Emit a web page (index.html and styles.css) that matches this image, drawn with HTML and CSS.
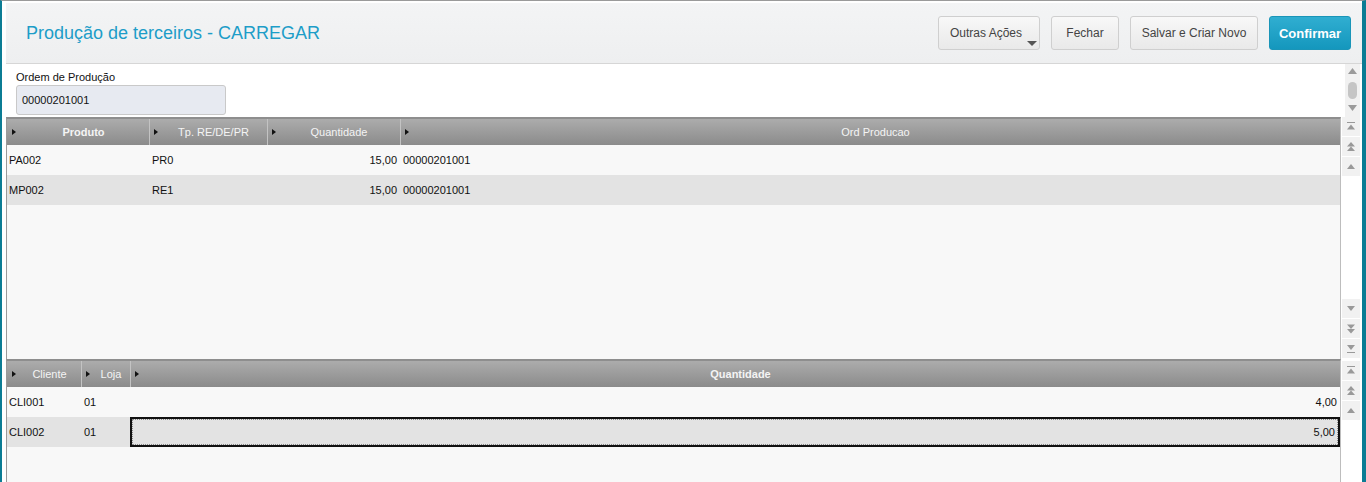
FILE: index.html
```html
<!DOCTYPE html>
<html>
<head>
	<meta charset="utf-8">
	<title>Produção de terceiros - CARREGAR</title>
	<link rel="stylesheet" href="styles.css">
</head>
<body>
	<div class="frame">
		<div class="topbar">
			<div class="title">Produção de terceiros - CARREGAR</div>
			<div class="actions">
				<button class="btn more">Outras Ações<span class="caret"></span></button>
				<button class="btn close">Fechar</button>
				<button class="btn savenew">Salvar e Criar Novo</button>
				<button class="btn primary">Confirmar</button>
			</div>
		</div>

		<div class="formarea">
			<div class="form">
				<label class="lbl">Ordem de Produção</label>
				<div class="field">00000201001</div>
			</div>
			<div class="vscroll">
				<svg class="up" width="9" height="6"><path d="M4.5 0 L9 6 L0 6Z" fill="#9a9a9a"/></svg>
				<div class="thumb"></div>
				<svg class="down" width="9" height="6"><path d="M0 0 L9 0 L4.5 6Z" fill="#9a9a9a"/></svg>
			</div>
		</div>

		<div class="gridwrap first">
			<div class="grid">
				<div class="line header cols1">
					<div class="cell"><i class="arrow"></i><span class="strong">Produto</span></div>
					<div class="cell"><i class="arrow"></i><span>Tp. RE/DE/PR</span></div>
					<div class="cell"><i class="arrow"></i><span>Quantidade</span></div>
					<div class="cell"><i class="arrow"></i><span>Ord Producao</span></div>
				</div>
				<div class="line row cols1">
					<div class="cell">PA002</div>
					<div class="cell">PR0</div>
					<div class="cell num">15,00</div>
					<div class="cell">00000201001</div>
				</div>
				<div class="line row alt cols1">
					<div class="cell">MP002</div>
					<div class="cell">RE1</div>
					<div class="cell num">15,00</div>
					<div class="cell">00000201001</div>
				</div>
			</div>
			<div class="gridnav">
				<div class="navgroup">
					<div class="navbtn"><svg width="10" height="9"><rect x="1" y="0" width="8" height="1" fill="#999"/><path d="M5 2.5 L9 7.5 L1 7.5Z" fill="#999"/></svg></div>
					<div class="navbtn"><svg width="10" height="10"><path d="M5 0 L9 4.5 L1 4.5Z M5 4.5 L9 9 L1 9Z" fill="#999"/></svg></div>
					<div class="navbtn"><svg width="10" height="7"><path d="M5 1 L9 6 L1 6Z" fill="#999"/></svg></div>
				</div>
				<div class="navgroup">
					<div class="navbtn"><svg width="10" height="7"><path d="M1 1 L9 1 L5 6Z" fill="#999"/></svg></div>
					<div class="navbtn"><svg width="10" height="10"><path d="M1 0.5 L9 0.5 L5 5Z M1 5 L9 5 L5 9.5Z" fill="#999"/></svg></div>
					<div class="navbtn"><svg width="10" height="9"><path d="M1 1 L9 1 L5 6Z" fill="#999"/><rect x="1" y="8" width="8" height="1" fill="#999"/></svg></div>
				</div>
			</div>
		</div>

		<div class="gridwrap second">
			<div class="grid">
				<div class="line header cols2">
					<div class="cell"><i class="arrow"></i><span>Cliente</span></div>
					<div class="cell"><i class="arrow"></i><span>Loja</span></div>
					<div class="cell"><i class="arrow"></i><span class="strong">Quantidade</span></div>
				</div>
				<div class="line row cols2">
					<div class="cell">CLI001</div>
					<div class="cell">01</div>
					<div class="cell num">4,00</div>
				</div>
				<div class="line row alt cols2">
					<div class="cell">CLI002</div>
					<div class="cell">01</div>
					<div class="cell num selected">5,00</div>
				</div>
			</div>
			<div class="gridnav">
				<div class="navgroup">
					<div class="navbtn"><svg width="10" height="9"><rect x="1" y="0" width="8" height="1" fill="#999"/><path d="M5 2.5 L9 7.5 L1 7.5Z" fill="#999"/></svg></div>
					<div class="navbtn"><svg width="10" height="10"><path d="M5 0 L9 4.5 L1 4.5Z M5 4.5 L9 9 L1 9Z" fill="#999"/></svg></div>
					<div class="navbtn"><svg width="10" height="7"><path d="M5 1 L9 6 L1 6Z" fill="#999"/></svg></div>
				</div>
			</div>
		</div>
	</div>
</body>
</html>
```

FILE: styles.css
```css
html {
  box-sizing: border-box;
}
*, *:before, *:after {
  box-sizing: inherit;
}
html, body {
	margin: 0;
	padding: 0;
}
body {
	font-family: "Liberation Sans", Arial, sans-serif;
	background: #fff;
	width: 1366px;
	height: 482px;
	overflow: hidden;
}
.frame {
	height: 482px;
	overflow: hidden;
	border-top: 1px solid #9a9a9a;
	border-left: 2px solid #0b7c94;
	border-right: 4px solid #0b7c94;
	padding: 2px 0 0 4px;
	display: flex;
	flex-direction: column;
}

/* title bar */
.topbar {
	flex: 0 0 61px;
	display: flex;
	align-items: center;
	justify-content: space-between;
	background: linear-gradient(#f3f4f5, #eeeff0);
	border-bottom: 1px solid #d6d6d6;
	padding: 0 11px 0 20px;
}
.title {
	font-size: 18px;
	color: #1d9dc8;
}
.actions {
	display: flex;
	gap: 11px;
}
.btn {
	position: relative;
	height: 34px;
	font-family: inherit;
	font-size: 12px;
	color: #444;
	background: linear-gradient(#f8f8f8, #e9e9e9);
	border: 1px solid #cfcfcf;
	border-radius: 3px;
	padding: 0;
}
.btn.more { width: 102px; text-align: left; padding-left: 11px; }
.btn.close { width: 68px; }
.btn.savenew { width: 128px; }
.btn.primary {
	width: 82px;
	color: #fff;
	font-size: 13px;
	font-weight: bold;
	background: linear-gradient(#30aed1, #1497bd);
	border-color: #1a95b8;
}
.btn .caret {
	position: absolute;
	right: 2px;
	bottom: 3px;
	border-left: 5px solid transparent;
	border-right: 5px solid transparent;
	border-top: 5px solid #555;
}

/* form */
.formarea {
	flex: 0 0 53px;
	display: flex;
	justify-content: space-between;
}
.form {
	padding: 6px 0 0 10px;
}
.lbl {
	display: block;
	font-size: 11px;
	color: #111;
	line-height: 14px;
}
.field {
	margin-top: 1px;
	width: 210px;
	height: 30px;
	background: #e7eaf1;
	border: 1px solid #c9c9c9;
	border-radius: 3px;
	font-size: 11px;
	color: #111;
	line-height: 28px;
	padding-left: 5px;
}
.vscroll {
	width: 15px;
	margin-right: 2px;
	background: #f1f1f1;
	display: flex;
	flex-direction: column;
	align-items: center;
	padding-top: 4px;
}
.vscroll .up {
	margin-bottom: 8px;
}
.vscroll .down {
	margin-top: 6px;
}
.vscroll .thumb {
	width: 9px;
	height: 17px;
	border-radius: 5px;
	background: #c5c5c5;
}

/* grids */
.gridwrap {
	display: flex;
}
.gridwrap.first {
	flex: 0 0 242px;
}
.gridwrap.second {
	flex: 0 0 260px;
}
.grid {
	flex: 1;
	background: #f8f8f8;
	border-top: 2px solid #8e8e8e;
	border-left: 1px solid #9a9a9a;
	border-right: 1px solid #bdbdbd;
}
.line {
	display: grid;
}
.cols1 { grid-template-columns: 142px 118px 133px 1fr; }
.cols2 { grid-template-columns: 74px 49px 1fr; }
.line.header {
	height: 26px;
	background: linear-gradient(#acacac, #8b8b8b);
}
.line.header .cell {
	display: flex;
	align-items: center;
	color: #f4f4f4;
	font-size: 11px;
	border-left: 1px solid #c3c3c3;
	padding-left: 4px;
}
.line.header .cell:first-child {
	border-left: none;
	padding-left: 5px;
}
.line.header .cell span {
	flex: 1;
	text-align: center;
	padding-right: 4px;
}
.line.header .cell .strong {
	font-weight: bold;
}
.arrow {
	width: 0;
	height: 0;
	border-top: 3.5px solid transparent;
	border-bottom: 3.5px solid transparent;
	border-left: 4px solid #111;
	margin-right: 6px;
}
.line.row {
	height: 30px;
	font-size: 11px;
	color: #111;
}
.line.row.alt {
	background: #e3e3e3;
}
.line.row .cell {
	display: flex;
	align-items: center;
	padding-left: 3px;
}
.line.row .cell:first-child {
	padding-left: 2px;
}
.line.row .cell.num {
	justify-content: flex-end;
	padding-right: 3px;
}
.line.row .cell.selected {
	border: 2px solid #111;
	outline: 1px dotted #888;
	outline-offset: -3px;
}

.gridnav {
	width: 21px;
	display: flex;
	flex-direction: column;
	justify-content: space-between;
	padding-left: 1px;
	background: #fff;
}
.navbtn {
	height: 20px;
	width: 18px;
	display: flex;
	align-items: center;
	justify-content: center;
	background: #f1f1f1;
	border-bottom: 1px solid #fff;
}
.gridwrap.second .gridnav {
	justify-content: flex-start;
	border-top: 2px solid #fff;
}
```
